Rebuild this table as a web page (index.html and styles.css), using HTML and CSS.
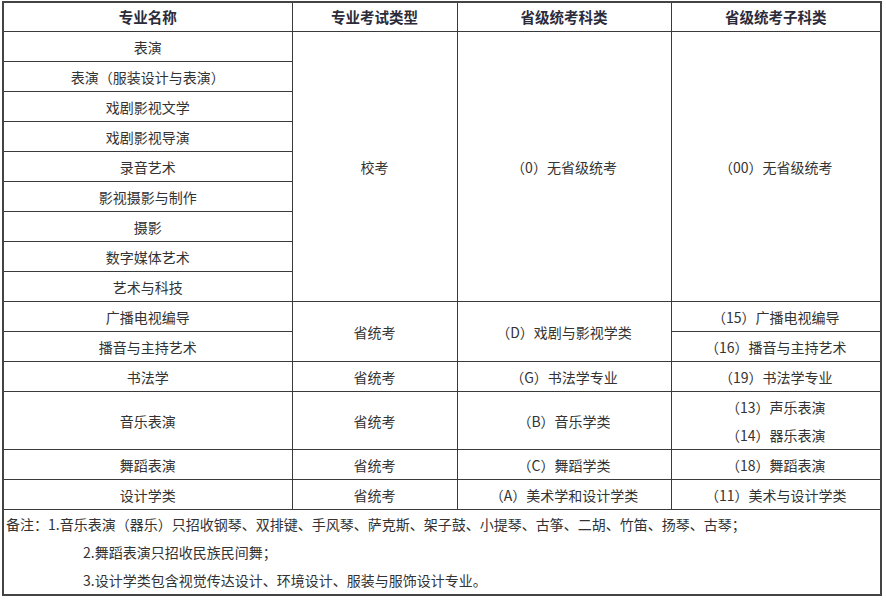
FILE: index.html
```html
<!DOCTYPE html>
<html lang="zh-CN">
<head>
<meta charset="utf-8">
<title>专业考试类型</title>
<link rel="stylesheet" href="styles.css">
</head>
<body>
<table class="tbl">
  <colgroup>
    <col class="c1"><col class="c2"><col class="c3"><col class="c4">
  </colgroup>
  <thead>
    <tr><th>专业名称</th><th>专业考试类型</th><th>省级统考科类</th><th>省级统考子科类</th></tr>
  </thead>
  <tbody>
    <tr><td>表演</td><td rowspan="9">校考</td><td rowspan="9">（0）无省级统考</td><td rowspan="9">（00）无省级统考</td></tr>
    <tr><td>表演（服装设计与表演）</td></tr>
    <tr><td>戏剧影视文学</td></tr>
    <tr><td>戏剧影视导演</td></tr>
    <tr><td>录音艺术</td></tr>
    <tr><td>影视摄影与制作</td></tr>
    <tr><td>摄影</td></tr>
    <tr><td>数字媒体艺术</td></tr>
    <tr><td>艺术与科技</td></tr>
    <tr><td>广播电视编导</td><td rowspan="2">省统考</td><td rowspan="2">（D）戏剧与影视学类</td><td>（15）广播电视编导</td></tr>
    <tr><td>播音与主持艺术</td><td>（16）播音与主持艺术</td></tr>
    <tr><td>书法学</td><td>省统考</td><td>（G）书法学专业</td><td>（19）书法学专业</td></tr>
    <tr><td>音乐表演</td><td>省统考</td><td>（B）音乐学类</td><td>（13）声乐表演<br>（14）器乐表演</td></tr>
    <tr><td>舞蹈表演</td><td>省统考</td><td>（C）舞蹈学类</td><td>（18）舞蹈表演</td></tr>
    <tr><td>设计学类</td><td>省统考</td><td>（A）美术学和设计学类</td><td>（11）美术与设计学类</td></tr>
    <tr>
      <td colspan="4" class="notes">
        <div>备注：1.音乐表演（器乐）只招收钢琴、双排键、手风琴、萨克斯、架子鼓、小提琴、古筝、二胡、竹笛、扬琴、古琴；</div>
        <div class="ind">2.舞蹈表演只招收民族民间舞；</div>
        <div class="ind">3.设计学类包含视觉传达设计、环境设计、服装与服饰设计专业。</div>
      </td>
    </tr>
  </tbody>
</table>
</body>
</html>
```

FILE: styles.css
```css
html, body {
  margin: 0;
  padding: 0;
  background: #fff;
}
body {
  padding: 1px 0 0 2px;
  font-family: "Noto Sans CJK SC", "Noto Sans", sans-serif;
  font-size: 14px;
  color: #333;
}
.tbl {
  border-collapse: collapse;
  width: 878px;
  table-layout: fixed;
  border: 2px solid #444;
}
.c1 { width: 289px; }
.c2 { width: 165px; }
.c3 { width: 214px; }
.c4 { width: 210px; }
.tbl th, .tbl td {
  border: 1px solid #3a3a3a;
  text-align: center;
  vertical-align: middle;
  line-height: 28px;
  padding: 1px 0 0;
  font-weight: normal;
  white-space: nowrap;
}
.tbl th {
  font-weight: bold;
  color: #2b2b3a;
  font-size: 14.5px;
  padding: 0;
}
.tbl td.notes {
  text-align: left;
  padding: 0 0 0 2px;
}
.ind {
  padding-left: 77px;
}
```
